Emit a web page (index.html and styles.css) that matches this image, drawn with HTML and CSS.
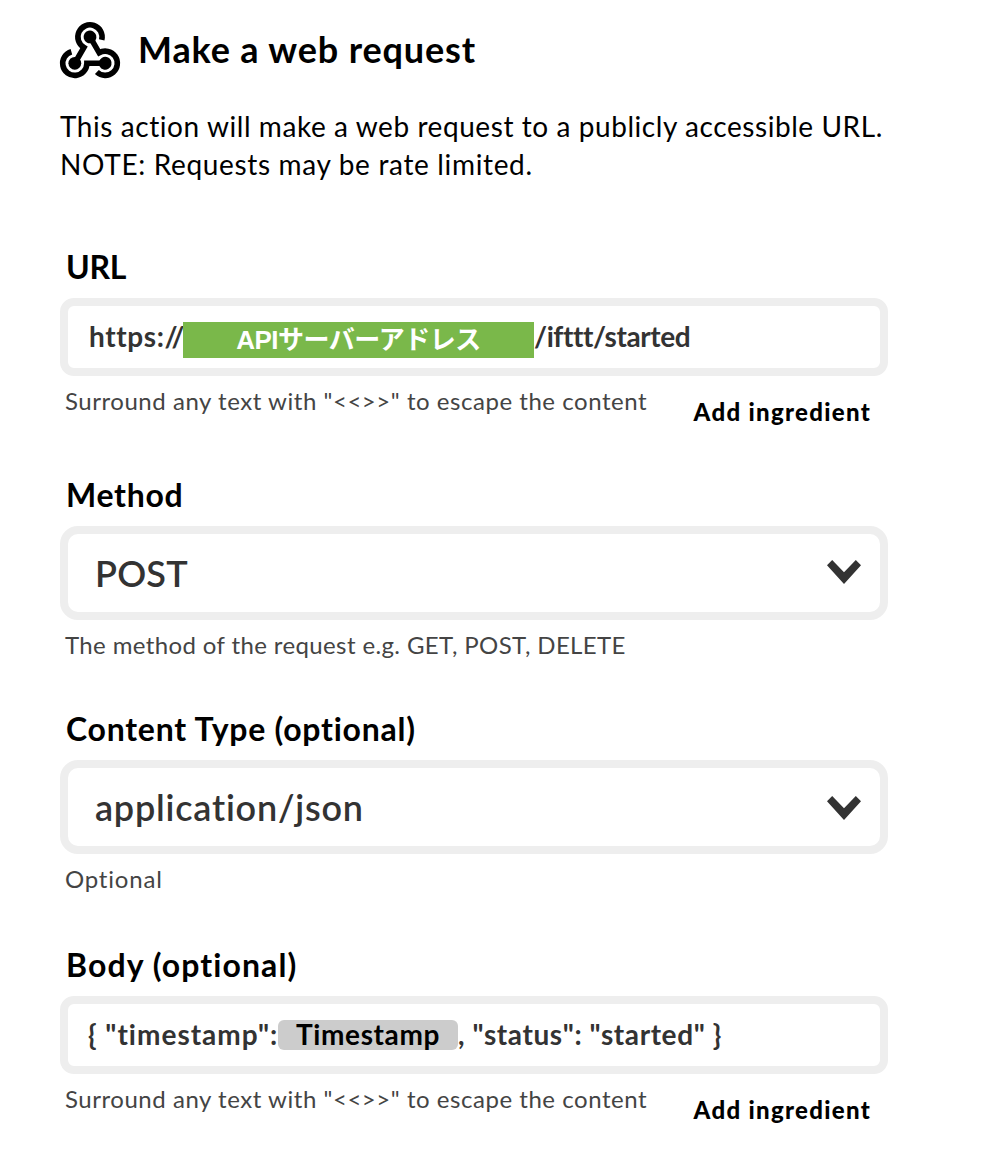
FILE: index.html
```
<!DOCTYPE html>
<html lang="en">

<head>
    <meta charset="utf-8">
    <meta name="viewport" content="width=device-width, initial-scale=1">
    <title>Make a web request</title>
    <link rel="stylesheet" href="styles.css">
</head>

<body>

    <div class="action">
        <div class="header">
            <!-- three hooks, each one turned by 120 degrees -->
            <svg class="logo" width="60" height="56" viewBox="-30 -32.5 60 56">
                <g id="hook">
                    <circle cx="-15.2" cy="8.8" r="6.4" />
                    <path d="M-18.6 -2.8A12.1 12.1 0 1 0 -3.1 8.8H15.2" />
                </g>
                <use href="#hook" transform="rotate(120)" />
                <use href="#hook" transform="rotate(240)" />
            </svg>
            <h1 class="title">Make a web request</h1>
        </div>
        <p class="description">This action will make a web request to a publicly accessible URL.<br>
            <span class="note">NOTE: Requests may be rate limited.</span></p>

        <div class="field">
            <label class="label label-url">URL</label>
            <div class="input">
                <span class="scheme">https://</span>
                <span class="mask">APIサーバーアドレス</span>
                <span class="path">/ifttt/started</span>
            </div>
            <div class="footer">
                <span class="hint">Surround any text with "&lt;&lt;&gt;&gt;" to escape the content</span>
                <a class="add">Add ingredient</a>
            </div>
        </div>

        <div class="field">
            <label class="label label-method">Method</label>
            <div class="select">
                <span class="value-method">POST</span>
                <svg class="arrow arrow-method" width="34" height="24" viewBox="0 0 34 24">
                    <path d="M0 5.3L5.2 0L17 12.3L28.8 0L34 5.3L17 24Z" />
                </svg>
            </div>
            <div class="hint hint-method">The method of the request e.g. GET, POST, DELETE</div>
        </div>

        <div class="field">
            <label class="label">Content Type (optional)</label>
            <div class="select">
                <span>application/json</span>
                <svg class="arrow" width="34" height="24" viewBox="0 0 34 24">
                    <path d="M0 5.3L5.2 0L17 12.3L28.8 0L34 5.3L17 24Z" />
                </svg>
            </div>
            <div class="hint hint-optional">Optional</div>
        </div>

        <div class="field field-body">
            <label class="label label-body">Body (optional)</label>
            <div class="input">
                <span class="json-start">{ "timestamp":</span>
                <span class="chip">Timestamp</span>
                <span class="json-end">, "status": "started" }</span>
            </div>
            <div class="footer">
                <span class="hint">Surround any text with "&lt;&lt;&gt;&gt;" to escape the content</span>
                <a class="add">Add ingredient</a>
            </div>
        </div>
    </div>

</body>

</html>
```
FILE: styles.css
```
* {
    box-sizing: border-box;
}

body {
    margin: 0;
    background: #fff;
    color: #000;
    font-family: Lato, "Noto Sans CJK JP", sans-serif;
}

.action {
    width: 828px;
    margin-left: 60px;
    padding-top: 22px;
    white-space: nowrap;
}

.header {
    display: flex;
    height: 54px;
}

.logo {
    fill: #000;
    overflow: visible;
}

.logo path {
    fill: none;
    stroke: #000;
    stroke-width: 5.6;
}

.title {
    margin: 0 0 0 18px;
    font-size: 36px;
    font-weight: 700;
    line-height: 54px;
    letter-spacing: 0.85px;
}

.description {
    margin: 31px 0 64px;
    font-size: 28px;
    line-height: 38px;
    letter-spacing: 0.57px;
}

.note {
    letter-spacing: 0.66px;
}

/* fields */
.field {
    margin-bottom: 49px;
}

.field-body {
    margin-top: 51px;
}

.label {
    display: block;
    margin: 0 0 11px 6px;
    font-size: 32px;
    font-weight: 700;
    line-height: 40px;
    letter-spacing: 0.75px;
}

.label-url {
    letter-spacing: -0.3px;
}

.label-method {
    letter-spacing: 0.7px;
}

.label-body {
    letter-spacing: 1.1px;
}

.input,
.select {
    display: flex;
    align-items: center;
    border: 8px solid #eee;
    color: #333;
}

.input {
    height: 78px;
    padding: 0 20px 2px;
    border-radius: 14px;
    font-size: 28px;
    font-weight: 700;
}

.select {
    justify-content: space-between;
    height: 94px;
    padding: 0 19px 0 27px;
    border-radius: 18px;
    font-size: 36px;
    font-weight: 600;
    letter-spacing: 0.78px;
}

.value-method {
    letter-spacing: 0.2px;
}

.arrow {
    margin-top: 2px;
    fill: #333;
}

.arrow-method {
    margin: 0 0 2px;
}

.scheme {
    width: 95px;
    padding-left: 1px;
    letter-spacing: 0.6px;
}

/* green block over the server name */
.mask {
    width: 351px;
    height: 36px;
    margin-top: 8px;
    background: #7ab84a;
    color: #fff;
    font-family: "Liberation Sans", "Noto Sans CJK JP", sans-serif;
    font-size: 26px;
    font-weight: 700;
    line-height: 36px;
    letter-spacing: -0.5px;
    text-align: center;
}

.path {
    letter-spacing: -0.4px;
}

.json-start {
    width: 190px;
    letter-spacing: 1px;
}

.chip {
    width: 180px;
    height: 30px;
    margin-top: 2px;
    border-radius: 6px;
    background: #ccc;
    color: #000;
    line-height: 29px;
    letter-spacing: 0.6px;
    text-align: center;
}

.json-end {
    letter-spacing: 0.6px;
}

.footer {
    display: flex;
    justify-content: space-between;
    height: 50px;
    padding-right: 17px;
}

.hint {
    display: block;
    margin: 10px 0 0 5px;
    color: #444;
    font-size: 24px;
    line-height: 30px;
    letter-spacing: 0.54px;
}

.hint-method {
    letter-spacing: 0.38px;
}

.hint-optional {
    letter-spacing: 0.8px;
}

.add {
    margin-top: 21px;
    font-size: 24px;
    font-weight: 900;
    line-height: 30px;
    letter-spacing: 1.3px;
}
```
